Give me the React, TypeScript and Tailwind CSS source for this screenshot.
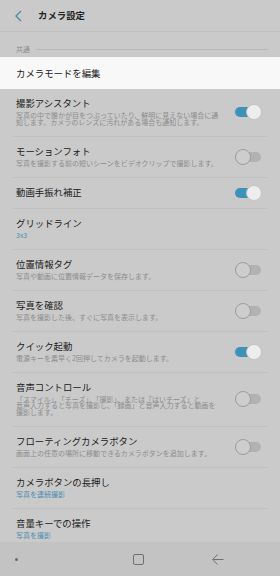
import React from 'react';

type Row = {
  title: string;
  sub?: string;
  value?: string;
  toggle?: boolean;
};

const rows: Row[] = [
  {
    title: '撮影アシスタント',
    sub: '写真の中で誰かが目をつぶっていたり、鮮明に見えない場合に通\n知します。カメラのレンズに汚れがある場合も通知します。',
    toggle: true,
  },
  { title: 'モーションフォト', sub: '写真を撮影する前の短いシーンをビデオクリップで撮影します。', toggle: false },
  { title: '動画手振れ補正', toggle: true },
  { title: 'グリッドライン', value: '3x3' },
  { title: '位置情報タグ', sub: '写真や動画に位置情報データを保存します。', toggle: false },
  { title: '写真を確認', sub: '写真を撮影した後、すぐに写真を表示します。', toggle: false },
  { title: 'クイック起動', sub: '電源キーを素早く2回押してカメラを起動します。', toggle: true },
  {
    title: '音声コントロール',
    sub: '「スマイル」、「チーズ」、「撮影」、または「はいチーズ」と\n音声入力すると写真を撮影し、「録画」と音声入力すると動画を\n撮影します。',
    toggle: false,
  },
  {
    title: 'フローティングカメラボタン',
    sub: '画面上の任意の場所に移動できるカメラボタンを追加します。',
    toggle: false,
  },
  { title: 'カメラボタンの長押し', value: '写真を連続撮影' },
  { title: '音量キーでの操作', value: '写真を撮影' },
];

const Toggle: React.FC<{ on: boolean }> = ({ on }) => (
  <div className="relative w-[27px] h-[16px] shrink-0">
    <div
      className={`absolute left-0 right-[1px] top-[3px] h-[10px] rounded-full ${
        on ? 'bg-[#3b93b9]' : 'bg-[#b2b2b2]'
      }`}
    />
    <div
      className={`absolute top-0 w-[16px] h-[16px] rounded-full border ${
        on ? 'right-0 bg-[#ededed] border-[#c4c4c4]' : 'left-0 bg-[#cdcdcd] border-[#9c9c9c]'
      }`}
    />
  </div>
);

const SettingRow: React.FC<{ row: Row; last: boolean }> = ({ row, last }) => (
  <div className={`mx-[12px] px-[4px] flex items-center ${last ? '' : 'border-b border-[#c0c0c0]'}`}>
    <div className={`flex-1 pt-[8px] ${row.sub || row.value ? 'pb-[10.5px]' : 'pb-[10px]'}`}>
      <div className="text-[9.4px] leading-[12px] text-[#202020] whitespace-nowrap">{row.title}</div>
      {row.sub && (
        <div className="mt-[3px] text-[7px] leading-[6.5px] text-[#8c8c8c] whitespace-pre">{row.sub}</div>
      )}
      {row.value && (
        <div className="mt-[3px] text-[7px] leading-[6.5px] text-[#4a8db0] whitespace-nowrap">{row.value}</div>
      )}
    </div>
    {row.toggle !== undefined && (
      <div className="ml-2 mr-[2px]">
        <Toggle on={row.toggle} />
      </div>
    )}
  </div>
);

export default function App() {
  return (
    <div
      className="w-[280px] h-[576px] bg-[#cacaca] flex flex-col overflow-hidden"
      style={{ fontFamily: '"Noto Sans CJK JP", "Noto Sans", sans-serif' }}
    >
      {/* header */}
      <div className="h-[32px] shrink-0 flex items-center border-b border-[#c0c0c0]">
        <svg className="ml-[14px]" width="9" height="12" viewBox="0 0 9 12">
          <path d="M7 1 L2 6 L7 11" fill="none" stroke="#4f89a6" strokeWidth="1.4" />
        </svg>
        <span className="ml-[15px] text-[9.4px] font-bold text-[#222]">カメラ設定</span>
      </div>

      {/* section label */}
      <div className="h-[25px] shrink-0 flex items-center px-[16px] pt-[9px]">
        <span className="text-[7px] text-[#8a8a8a] leading-none">共通</span>
        <div className="flex-1 ml-[6px] mr-[-4px] h-px bg-[#b8b8b8]" />
      </div>

      {/* highlighted row */}
      <div className="h-[32px] shrink-0 bg-[#f8f8f8] flex items-center px-[16px]">
        <span className="text-[9.4px] text-[#202020]">カメラモードを編集</span>
      </div>

      {/* list */}
      <div className="flex-1 overflow-hidden">
        {rows.map((r, i) => (
          <SettingRow key={r.title} row={r} last={i === rows.length - 1} />
        ))}
      </div>

      {/* nav bar */}
      <div className="h-[34px] shrink-0 bg-[#c3c3c3] flex items-center">
        <div className="ml-[15px] w-[3px] h-[3px] rounded-full bg-[#6a6a6a]" />
        <div className="ml-[115px] w-[11px] h-[11px] border border-[#707070] rounded-[2px]" />
        <svg width="12" height="11" viewBox="0 0 12 11" className="ml-[68px]">
          <path d="M5.5 0.5 L0.8 5.5 L5.5 10.5 M0.8 5.5 H11.5" fill="none" stroke="#707070" strokeWidth="1" />
        </svg>
      </div>
    </div>
  );
}
